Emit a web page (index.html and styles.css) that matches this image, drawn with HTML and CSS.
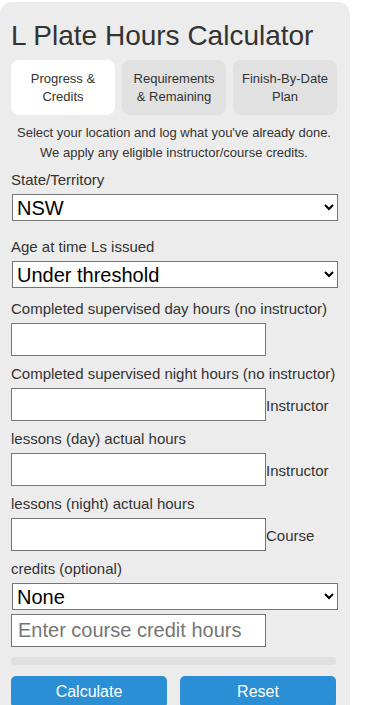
FILE: index.html
```html
<!DOCTYPE html>
<html lang="en">
<head>
    <meta charset="UTF-8">
    <meta name="viewport" content="width=device-width, initial-scale=1.0">
    <title>L Plate Hours Calculator</title>
    <link rel="stylesheet" href="styles.css">
</head>
<body>
    <div class="calculator">
        <h1>L Plate Hours Calculator</h1>

        <div class="tabs">
            <button class="tab active">Progress &amp; Credits</button>
            <button class="tab">Requirements &amp; Remaining</button>
            <button class="tab">Finish-By-Date Plan</button>
        </div>

        <p class="intro">Select your location and log what you've already done. We apply any eligible instructor/course credits.</p>

        <label class="field-label" for="state">State/Territory</label>
        <select id="state" class="field-select">
            <option>NSW</option>
            <option>VIC</option>
            <option>QLD</option>
            <option>SA</option>
            <option>WA</option>
            <option>TAS</option>
            <option>ACT</option>
            <option>NT</option>
        </select>

        <label class="field-label" for="age">Age at time Ls issued</label>
        <select id="age" class="field-select age">
            <option>Under threshold</option>
            <option>Over threshold</option>
        </select>

        <label class="field-label" for="dayHours">Completed supervised day hours (no instructor)</label>
        <input type="number" id="dayHours" class="field-input">

        <label class="field-label" for="nightHours">Completed supervised night hours (no instructor)</label>
        <div class="field-wrap"><input type="number" id="nightHours" class="field-input"><label for="instrDay">Instructor lessons (day) actual hours</label></div>
        <div class="field-wrap"><input type="number" id="instrDay" class="field-input"><label for="instrNight">Instructor lessons (night) actual hours</label></div>
        <div class="field-wrap"><input type="number" id="instrNight" class="field-input"><label for="course">Course credits (optional)</label></div>

        <select id="course" class="field-select course">
            <option>None</option>
            <option>Safer Drivers Course</option>
        </select>
        <input type="number" id="courseHours" class="field-input" placeholder="Enter course credit hours">

        <div class="progress"><div class="progress-fill" style="width: 0%"></div></div>

        <div class="actions">
            <button class="btn">Calculate</button>
            <button class="btn">Reset</button>
        </div>
    </div>
</body>
</html>
```

FILE: styles.css
```css
body {
    margin: 0;
    padding: 0;
    background: #fff;
    font-family: "Liberation Sans", Arial, sans-serif;
    color: #333;
}
.calculator {
    width: 350px;
    box-sizing: border-box;
    margin-top: 2px;
    padding: 18px 13px 0 11px;
    background: #ebeceb;
    border-radius: 12px 12px 0 0;
}
h1 {
    margin: 0 0 8px;
    font-size: 28px;
    font-weight: normal;
    line-height: 32px;
    color: #333;
}
.tabs {
    display: flex;
    gap: 7px;
}
.tab {
    flex: 1;
    height: 55px;
    padding: 0 6px;
    border: none;
    border-radius: 8px;
    background: #e0e1e0;
    font-family: inherit;
    font-size: 13px;
    line-height: 18px;
    color: #333;
    cursor: pointer;
}
.tab.active {
    background: #fff;
}
.intro {
    margin: 8px 0;
    font-size: 13px;
    line-height: 20px;
    text-align: center;
}
.field-label {
    display: block;
    margin-bottom: 6px;
    font-size: 15px;
    line-height: 17px;
}
.field-select {
    display: block;
    width: 326px;
    height: 27px;
    margin: 0 0 17px 1px;
    font-family: inherit;
    font-size: 20px;
    color: #000;
    background: #fff;
    border: 1px solid #767676;
}
.field-select.age {
    margin-bottom: 12px;
}
.field-select.course {
    margin-bottom: 4px;
}
.field-input {
    display: block;
    width: 255px;
    height: 33px;
    box-sizing: border-box;
    margin: 0 0 9px;
    padding: 4px 6px;
    font-family: inherit;
    font-size: 20px;
    background: #fff;
    border: 1px solid #767676;
}
.field-input::placeholder {
    color: #757575;
}
.field-wrap {
    margin-bottom: 6px;
    font-size: 15px;
    line-height: 17px;
}
.field-wrap .field-input {
    display: inline-block;
}
.progress {
    height: 8px;
    margin: 10px 1px 11px 0;
    background: #dfe0df;
    border-radius: 4px;
    overflow: hidden;
}
.progress-fill {
    height: 100%;
    background: #2b8fd6;
}
.actions {
    display: flex;
    gap: 13px;
    padding-right: 1px;
}
.btn {
    flex: 1;
    padding: 7px 0;
    border: none;
    border-radius: 5px;
    background: #2b8fd6;
    color: #fff;
    font-family: inherit;
    font-size: 16px;
    line-height: 18px;
    cursor: pointer;
}
.btn:hover {
    background: #237bbb;
}
```
